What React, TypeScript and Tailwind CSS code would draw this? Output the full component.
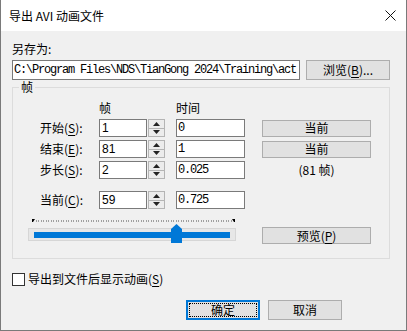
import type { ReactNode } from 'react'

const cjk = "font-['Noto_Sans_CJK_SC','Liberation_Sans',sans-serif]"
const mono = "font-['Liberation_Mono','Noto_Sans_CJK_SC',monospace]"

function Key({ children }: { children: ReactNode }) {
  return <span className="underline underline-offset-2">{children}</span>
}

function Button({ children, className = '' }: { children: ReactNode; className?: string }) {
  return (
    <div
      className={`flex items-center justify-center bg-[#e1e1e1] border border-[#adadad] text-[12px] leading-[14px] text-black ${className}`}
    >
      {children}
    </div>
  )
}

function Spinner({ value }: { value: string }) {
  return (
    <div className="flex h-[18px] w-[66px]">
      <div className="flex-1 border border-[#7a7a7a] bg-white pl-[2px] flex items-center text-[12px] font-['Liberation_Sans',sans-serif] leading-none">
        {value}
      </div>
      <div className="w-[17px] ml-[1px] border border-[#b4b4b4] flex flex-col bg-[#ececec]">
        <div className="flex-1 flex items-center justify-center border-b border-[#b4b4b4]">
          <svg width="7" height="4" viewBox="0 0 7 4">
            <polygon points="0,4 3.5,0 7,4" fill="#222" />
          </svg>
        </div>
        <div className="flex-1 flex items-center justify-center">
          <svg width="7" height="4" viewBox="0 0 7 4">
            <polygon points="0,0 3.5,4 7,0" fill="#222" />
          </svg>
        </div>
      </div>
    </div>
  )
}

function TimeBox({ value }: { value: string }) {
  return (
    <div
      className={`w-[69px] h-[18px] border border-[#7a7a7a] bg-white pl-[1px] flex items-center text-[12px] tracking-[-1.2px] leading-none ${mono}`}
    >
      {value}
    </div>
  )
}

function Row({ label, k, frame, time, right }: { label: string; k: string; frame: string; time: string; right?: ReactNode }) {
  return (
    <div className="flex items-center h-[18px]">
      <div className="w-[59px] text-[12px] leading-[14px]">
        {label}(<Key>{k}</Key>):
      </div>
      <Spinner value={frame} />
      <div className="ml-[11px]">
        <TimeBox value={time} />
      </div>
      <div className="ml-[17px] w-[109px]">{right}</div>
    </div>
  )
}

function Ticks() {
  const ticks = []
  for (let i = 1; i < 80; i++) {
    const x = 1 + i * 2.5
    ticks.push(<rect key={i} x={Math.round(x)} y={1} width={1} height={2} fill="#a0a0a0" />)
  }
  return (
    <svg width="203" height="4" viewBox="0 0 203 4" className="block ml-[4px]">
      {ticks}
      <polygon points="0,0 3,0 1,3 0,3" fill="#000" />
      <polygon points="200,0 203,0 203,3 202,3" fill="#000" />
    </svg>
  )
}

function Slider({ pos }: { pos: number }) {
  return (
    <div className="w-[208px]">
      <Ticks />
      <div className="relative mt-[5px] h-[13px] border border-[#d6d6d6] bg-[#e7e7e7] flex items-center px-[5px]">
        <div className="h-[6px] w-full bg-[#0078d7]" />
        <svg
          width="11"
          height="19"
          viewBox="0 0 11 19"
          className="absolute top-[-5px]"
          style={{ left: pos }}
        >
          <polygon points="0,5 5.5,0 11,5 11,19 0,19" fill="#0078d7" />
        </svg>
      </div>
    </div>
  )
}

export default function App() {
  return (
    <div className={`w-[407px] h-[331px] bg-[#f0f0f0] border-x border-b border-[#7a7a7a] flex flex-col text-black ${cjk}`}>
      <div className="h-[31px] bg-white flex items-center justify-between pl-[8px] pr-[10px]">
        <span className="text-[12px] leading-[14px]">导出 AVI 动画文件</span>
        <svg width="11" height="11" viewBox="0 0 11 11">
          <path d="M0.5 0.5 L10.5 10.5 M10.5 0.5 L0.5 10.5" stroke="#111" strokeWidth="1" />
        </svg>
      </div>

      <div className="pl-[11px] w-[389px]">
        <div className="mt-[11px] text-[12px] leading-[14px]">另存为:</div>

        <div className="mt-[4px] flex h-[20px]">
          <div
            className={`w-[288px] border border-[#7a7a7a] bg-white pl-[1px] flex items-center overflow-hidden whitespace-nowrap text-[12px] tracking-[-1.2px] leading-none ${mono}`}
          >
            C:\Program Files\NDS\TianGong 2024\Training\act
          </div>
          <Button className="ml-[6px] w-[84px]">
            浏览(<Key>B</Key>)...
          </Button>
        </div>

        <div className="relative mt-[7px] h-[172px] border border-[#dcdcdc]">
          <span className="absolute left-[6px] top-[-8px] bg-[#f0f0f0] px-[2px] text-[12px] leading-[14px]">帧</span>

          <div className="pl-[27px]">
            <div className="flex pt-[13px] text-[12px] leading-[14px]">
              <span className="ml-[59px] w-[77px]">帧</span>
              <span>时间</span>
            </div>

            <div className="mt-[4px] flex flex-col gap-[3px]">
              <Row
                label="开始"
                k="S"
                frame="1"
                time="0"
                right={<Button className="h-[17px]">当前</Button>}
              />
              <Row
                label="结束"
                k="E"
                frame="81"
                time="1"
                right={<Button className="h-[17px]">当前</Button>}
              />
              <Row
                label="步长"
                k="S"
                frame="2"
                time="0.025"
                right={<div className="text-center text-[12px] leading-[14px]">(81 帧)</div>}
              />
            </div>

            <div className="mt-[12px]">
              <Row label="当前" k="C" frame="59" time="0.725" />
            </div>
          </div>

          <div className="mt-[10px] flex items-end pl-[15px]">
            <Slider pos={142} />
            <Button className="ml-[26px] mb-[-3px] w-[109px] h-[17px]">
              预览(<Key>P</Key>)
            </Button>
          </div>
        </div>

        <div className="mt-[13px] flex items-center">
          <div className="w-[13px] h-[13px] border border-[#333] bg-white" />
          <span className="ml-[3px] text-[12px] leading-[14px]">
            导出到文件后显示动画(<Key>S</Key>)
          </span>
        </div>
      </div>

      <div className="mt-[14px] flex justify-end pr-[64px] gap-[8px]">
        <div className="relative w-[74px] h-[20px] border-2 border-[#0078d7] bg-[#e1e1e1] flex items-center justify-center text-[12px] leading-[14px]">
          <div className="absolute inset-[1px] border border-dotted border-black" />
          确定
        </div>
        <Button className="w-[74px] h-[20px]">取消</Button>
      </div>
    </div>
  )
}
